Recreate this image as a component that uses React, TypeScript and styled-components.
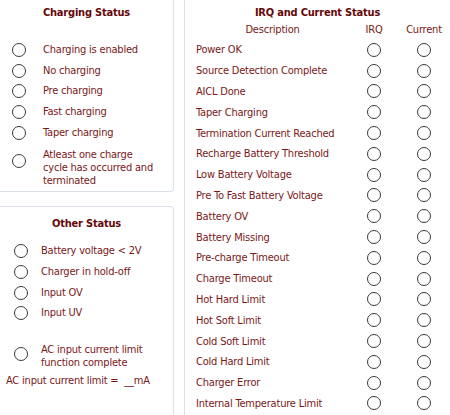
import React from "react";
import styled, { createGlobalStyle } from "styled-components";

const Global = createGlobalStyle`
  html, body { margin: 0; padding: 0; background: #ffffff; }
  body {
    font-family: "DejaVu Sans Condensed", "DejaVu Sans", Verdana, sans-serif;
    font-stretch: condensed;
    font-size: 11px;
    letter-spacing: -0.2px;
    color: #7a1818;
  }
`;

const Page = styled.div`
  display: flex;
  align-items: flex-start;
  width: 450px;
  height: 415px;
  overflow: hidden;
`;

const LeftColumn = styled.div`
  width: 174px;
  display: flex;
  flex-direction: column;
  gap: 14px;
  flex-shrink: 0;
`;

const Panel = styled.div<{ $height: number; $open?: boolean }>`
  box-sizing: border-box;
  height: ${(p) => p.$height}px;
  border-right: 1px solid #d9e0e8;
  border-top: ${(p) => (p.$open ? "1px solid #d9e0e8" : "none")};
  border-bottom: ${(p) => (p.$open ? "none" : "1px solid #d9e0e8")};
  border-radius: ${(p) => (p.$open ? "0 4px 0 0" : "0 0 4px 0")};
  padding-top: ${(p) => (p.$open ? 10 : 6)}px;
`;

const Title = styled.div<{ $gap: number }>`
  font-weight: bold;
  color: #660808;
  line-height: 14px;
  text-align: center;
  margin-bottom: ${(p) => p.$gap}px;
`;

const StatusRow = styled.div<{ $h?: number; $indent: number; $align?: string }>`
  display: flex;
  align-items: ${(p) => p.$align || "center"};
  height: ${(p) => p.$h || 20.8}px;
  padding-left: ${(p) => p.$indent}px;
`;

const Circle = styled.span`
  display: inline-block;
  box-sizing: border-box;
  width: 14px;
  height: 14px;
  border: 1.3px solid #3a3a3a;
  border-radius: 50%;
  flex-shrink: 0;
`;

const Label = styled.span<{ $left: number; $multi?: boolean }>`
  margin-left: ${(p) => p.$left}px;
  line-height: ${(p) => (p.$multi ? 13 : 14)}px;
  white-space: nowrap;
`;

const LimitText = styled.div`
  padding-left: 6px;
  margin-top: 5px;
  line-height: 14px;
  white-space: pre;
`;

const RightPanel = styled.div`
  box-sizing: border-box;
  margin-left: 10px;
  width: 266px;
  height: 415px;
  border-left: 1px solid #d9e0e8;
  padding-top: 6px;
  flex-shrink: 0;
`;

const Grid = styled.div`
  display: grid;
  grid-template-columns: 153px 50px 50px;
  grid-template-rows: 16.5px;
  grid-auto-rows: 20.8px;
  padding-left: 11px;
`;

const HeadCell = styled.div`
  text-align: center;
  line-height: 14px;
`;

const DescCell = styled.div`
  display: flex;
  align-items: center;
  white-space: nowrap;
`;

const MarkCell = styled.div`
  display: flex;
  align-items: center;
  justify-content: center;
`;

const TableRow = styled.div`
  display: contents;
`;

const charging = [
  "Charging is enabled",
  "No charging",
  "Pre charging",
  "Fast charging",
  "Taper charging",
];

const other = ["Battery voltage < 2V", "Charger in hold-off", "Input OV", "Input UV"];

const irq = [
  "Power OK",
  "Source Detection Complete",
  "AICL Done",
  "Taper Charging",
  "Termination Current Reached",
  "Recharge Battery Threshold",
  "Low Battery Voltage",
  "Pre To Fast Battery Voltage",
  "Battery OV",
  "Battery Missing",
  "Pre-charge Timeout",
  "Charge Timeout",
  "Hot Hard Limit",
  "Hot Soft Limit",
  "Cold Soft Limit",
  "Cold Hard Limit",
  "Charger Error",
  "Internal Temperature Limit",
];

export default function App() {
  return (
    <>
      <Global />
      <Page>
        <LeftColumn>
          <Panel $height={192}>
            <Title $gap={19.5}>Charging Status</Title>
            {charging.map((t) => (
              <StatusRow key={t} $indent={12}>
                <Circle />
                <Label $left={17}>{t}</Label>
              </StatusRow>
            ))}
            <StatusRow $indent={12} $h={44} $align="flex-start">
              <Circle style={{ marginTop: 11 }} />
              <Label $left={17} $multi style={{ marginTop: 5 }}>
                Atleast one charge
                <br />
                cycle has occurred and
                <br />
                terminated
              </Label>
            </StatusRow>
          </Panel>
          <Panel $height={260} $open>
            <Title $gap={9.6}>Other Status</Title>
            {other.map((t) => (
              <StatusRow key={t} $indent={14}>
                <Circle />
                <Label $left={13}>{t}</Label>
              </StatusRow>
            ))}
            <StatusRow $indent={14} $h={45} $align="flex-end">
              <Circle style={{ marginBottom: 7.5 }} />
              <Label $left={13} $multi>
                AC input current limit
                <br />
                function complete
              </Label>
            </StatusRow>
            <LimitText>AC input current limit =  __mA</LimitText>
          </Panel>
        </LeftColumn>
        <RightPanel>
          <Title $gap={3}>IRQ and Current Status</Title>
          <Grid>
            <TableRow>
              <HeadCell>Description</HeadCell>
              <HeadCell>IRQ</HeadCell>
              <HeadCell>Current</HeadCell>
            </TableRow>
            {irq.map((t) => (
              <TableRow key={t}>
                <DescCell>{t}</DescCell>
                <MarkCell>
                  <Circle />
                </MarkCell>
                <MarkCell>
                  <Circle />
                </MarkCell>
              </TableRow>
            ))}
          </Grid>
        </RightPanel>
      </Page>
    </>
  );
}
